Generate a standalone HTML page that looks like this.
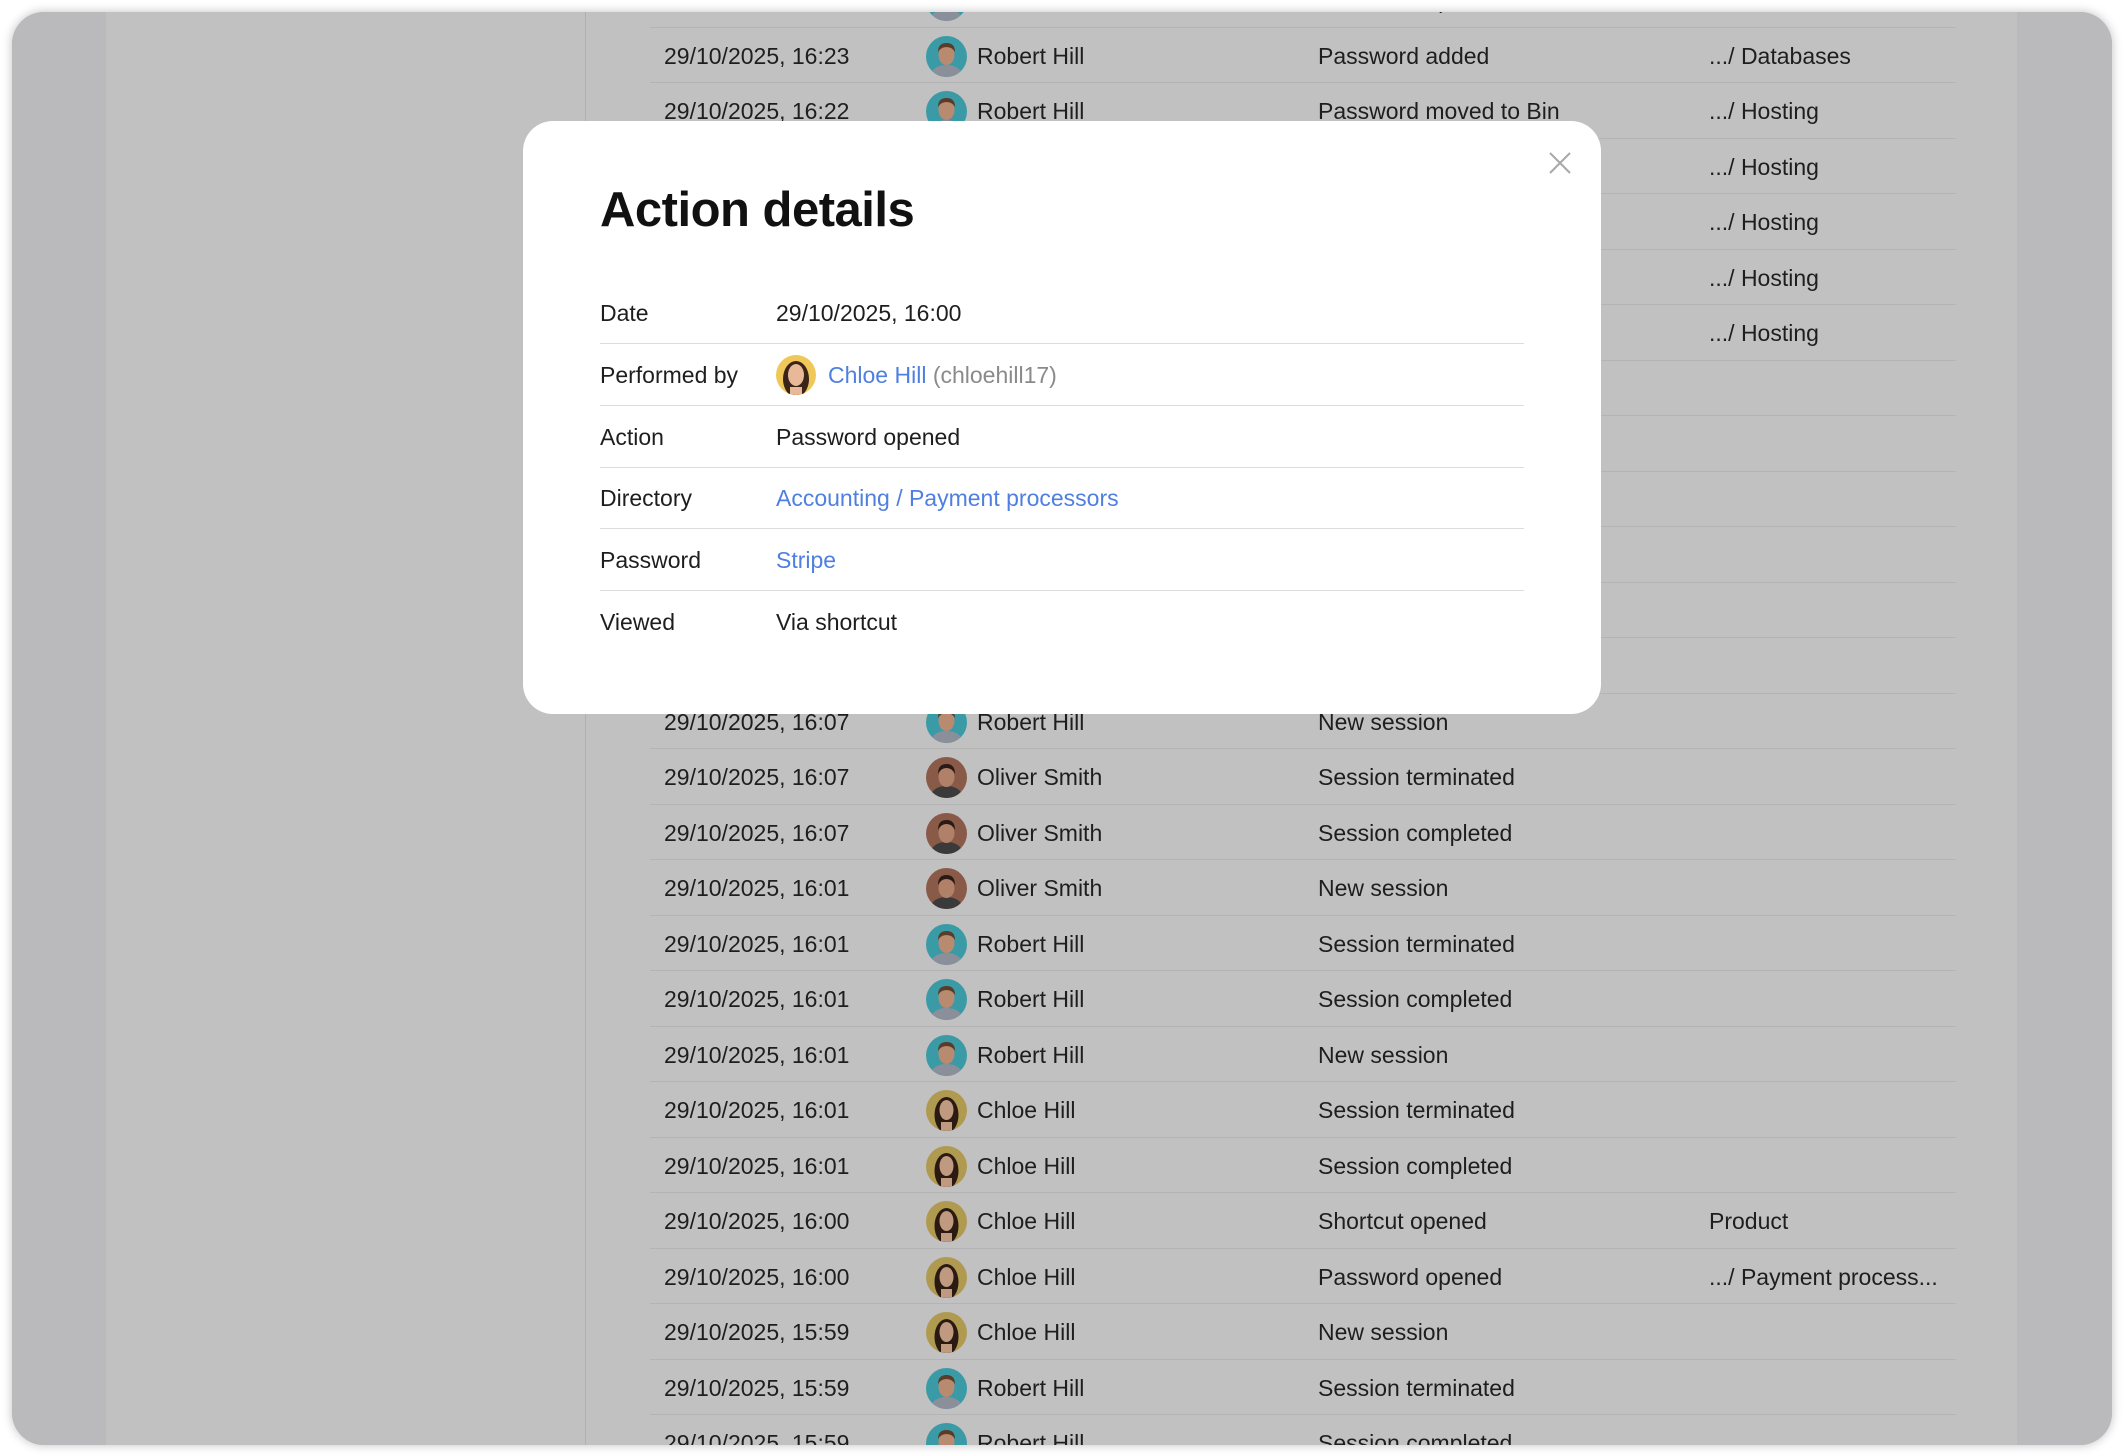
<!DOCTYPE html>
<html><head><meta charset="utf-8"><style>
*{margin:0;padding:0;box-sizing:border-box}
body{width:2124px;height:1456px;background:#fff;position:relative;overflow:hidden;font-family:"Liberation Sans",sans-serif;}
#win{position:absolute;left:12px;top:12px;width:2100px;height:1433px;border-radius:32px;overflow:hidden;background:#c1c1c1;box-shadow:0 0 10px rgba(0,0,0,0.25);}
#side{position:absolute;left:0;top:0;width:94px;height:100%;background:#bababc;}
#rside{position:absolute;right:0;top:0;width:95px;height:100%;background:#bababc;}
#div{position:absolute;left:573px;top:0;width:1px;height:100%;background:#b0b0b0;}
.row{position:absolute;left:638px;width:1306px;height:55.5px;border-bottom:1.5px solid #b4b4b4;font-size:23px;color:#1e1e1e;}
.row span{position:absolute;top:0;line-height:57px;white-space:nowrap;}
.av{position:absolute;left:276px;top:8px;width:41px;height:41px;}
#modal{position:absolute;left:523px;top:121px;width:1078px;height:593px;background:#fff;border-radius:30px;}
h1{position:absolute;left:77px;top:61px;font-size:49px;font-weight:bold;color:#111;letter-spacing:-0.5px;}
.d{position:absolute;left:77px;width:924px;height:61.5px;font-size:23px;color:#1e1e1e;}
.d.b{border-bottom:1.5px solid #dcdcdc;}
.d span{position:absolute;top:0;line-height:62px;white-space:nowrap;}
.l{left:0}.v{left:176px}
a{color:#4f7fe0;text-decoration:none}
</style></head><body>
<div id="win">
<div id="side"></div><div id="rside"></div><div id="div"></div>
<div id="rows"></div>
</div>
<div id="modal">
<svg style="position:absolute;left:1026px;top:31px" width="22" height="22" viewBox="0 0 22 22"><path d="M1 1L21 21M21 1L1 21" stroke="#a8a8a8" stroke-width="2"/></svg>
<h1>Action details</h1>
<div class="d b" style="top:161px"><span class="l">Date</span><span class="v">29/10/2025, 16:00</span></div>
<div class="d b" style="top:223px"><span class="l">Performed by</span>
<svg style="position:absolute;left:176px;top:11px" width="40" height="40" viewBox="0 0 40 40"><defs><clipPath id="cm"><circle cx="20" cy="20" r="20"/></clipPath></defs><g clip-path="url(#cm)"><rect width="40" height="40" fill="#f0c85a"/><ellipse cx="20" cy="24" rx="13" ry="18" fill="#3a2418"/><ellipse cx="20" cy="20" rx="8" ry="11" fill="#e8b898"/><rect x="14" y="32" width="12" height="10" fill="#e8b898"/></g></svg>
<span style="left:228px;top:0;line-height:62px"><a>Chloe Hill</a> <span style="position:static;color:#8a8a8a">(chloehill17)</span></span></div>
<div class="d b" style="top:285px"><span class="l">Action</span><span class="v">Password opened</span></div>
<div class="d b" style="top:346px"><span class="l">Directory</span><span class="v"><a>Accounting / Payment processors</a></span></div>
<div class="d b" style="top:408px"><span class="l">Password</span><span class="v"><a>Stripe</a></span></div>
<div class="d" style="top:470px"><span class="l">Viewed</span><span class="v">Via shortcut</span></div>
</div>
<script>
(function(){
var R='<defs><clipPath id="c%"><circle cx="20.5" cy="20.5" r="20.5"/></clipPath></defs><g clip-path="url(#c%)">';
function av(t,i){
 if(t=='R')return '<svg class="av" viewBox="0 0 41 41">'+R.replace(/%/g,i)+'<rect width="41" height="41" fill="#3a9aa6"/><ellipse cx="20.5" cy="38" rx="15" ry="9" fill="#8a8f9a"/><ellipse cx="20.5" cy="19" rx="8" ry="10" fill="#b88a70"/><path d="M12 16Q12 7 20.5 7Q29 7 29 16Q26 11 20.5 11Q15 11 12 16Z" fill="#5a3c28"/></g></svg>';
 if(t=='O')return '<svg class="av" viewBox="0 0 41 41">'+R.replace(/%/g,i)+'<rect width="41" height="41" fill="#8a5a48"/><ellipse cx="20.5" cy="38" rx="15" ry="9" fill="#3a3a3a"/><ellipse cx="20.5" cy="20" rx="8" ry="10" fill="#b08068"/><path d="M12 17Q12 7 20.5 7Q29 7 29 17Q26 11 20.5 11Q15 11 12 17Z" fill="#2a1a14"/></g></svg>';
 return '<svg class="av" viewBox="0 0 41 41">'+R.replace(/%/g,i)+'<rect width="41" height="41" fill="#b09a50"/><ellipse cx="20.5" cy="25" rx="12" ry="18" fill="#2a1a12"/><ellipse cx="20.5" cy="20" rx="7" ry="10" fill="#c09a80"/><rect x="15" y="32" width="11" height="10" fill="#c09a80"/></g></svg>';
}
var d=[
['29/10/2025, 16:24','R','Robert Hill','Password opened',''],
['29/10/2025, 16:23','R','Robert Hill','Password added','.../ Databases'],
['29/10/2025, 16:22','R','Robert Hill','Password moved to Bin','.../ Hosting'],
['29/10/2025, 16:22','R','Robert Hill','Password added','.../ Hosting'],
['29/10/2025, 16:21','R','Robert Hill','Password added','.../ Hosting'],
['29/10/2025, 16:21','R','Robert Hill','Password added','.../ Hosting'],
['29/10/2025, 16:20','R','Robert Hill','Password added','.../ Hosting'],
['29/10/2025, 16:19','R','Robert Hill','New session',''],
['29/10/2025, 16:15','R','Robert Hill','Session completed',''],
['29/10/2025, 16:12','R','Robert Hill','New session',''],
['29/10/2025, 16:10','R','Robert Hill','Session completed',''],
['29/10/2025, 16:09','R','Robert Hill','New session',''],
['29/10/2025, 16:08','R','Robert Hill','Session completed',''],
['29/10/2025, 16:07','R','Robert Hill','New session',''],
['29/10/2025, 16:07','O','Oliver Smith','Session terminated',''],
['29/10/2025, 16:07','O','Oliver Smith','Session completed',''],
['29/10/2025, 16:01','O','Oliver Smith','New session',''],
['29/10/2025, 16:01','R','Robert Hill','Session terminated',''],
['29/10/2025, 16:01','R','Robert Hill','Session completed',''],
['29/10/2025, 16:01','R','Robert Hill','New session',''],
['29/10/2025, 16:01','C','Chloe Hill','Session terminated',''],
['29/10/2025, 16:01','C','Chloe Hill','Session completed',''],
['29/10/2025, 16:00','C','Chloe Hill','Shortcut opened','Product'],
['29/10/2025, 16:00','C','Chloe Hill','Password opened','.../ Payment process...'],
['29/10/2025, 15:59','C','Chloe Hill','New session',''],
['29/10/2025, 15:59','R','Robert Hill','Session terminated',''],
['29/10/2025, 15:59','R','Robert Hill','Session completed','']
];
var h='';
for(var n=0;n<d.length;n++){var r=d[n];var yy=55.5*n-27.75-12;
h+='<div class="row" style="top:'+yy+'px"><span style="left:14px">'+r[0]+'</span>'+av(r[1],n)+'<span style="left:327px">'+r[2]+'</span><span style="left:668px">'+r[3]+'</span><span style="left:1059px">'+r[4]+'</span></div>';}
document.getElementById('rows').innerHTML=h;
})();
</script>
</body></html>
